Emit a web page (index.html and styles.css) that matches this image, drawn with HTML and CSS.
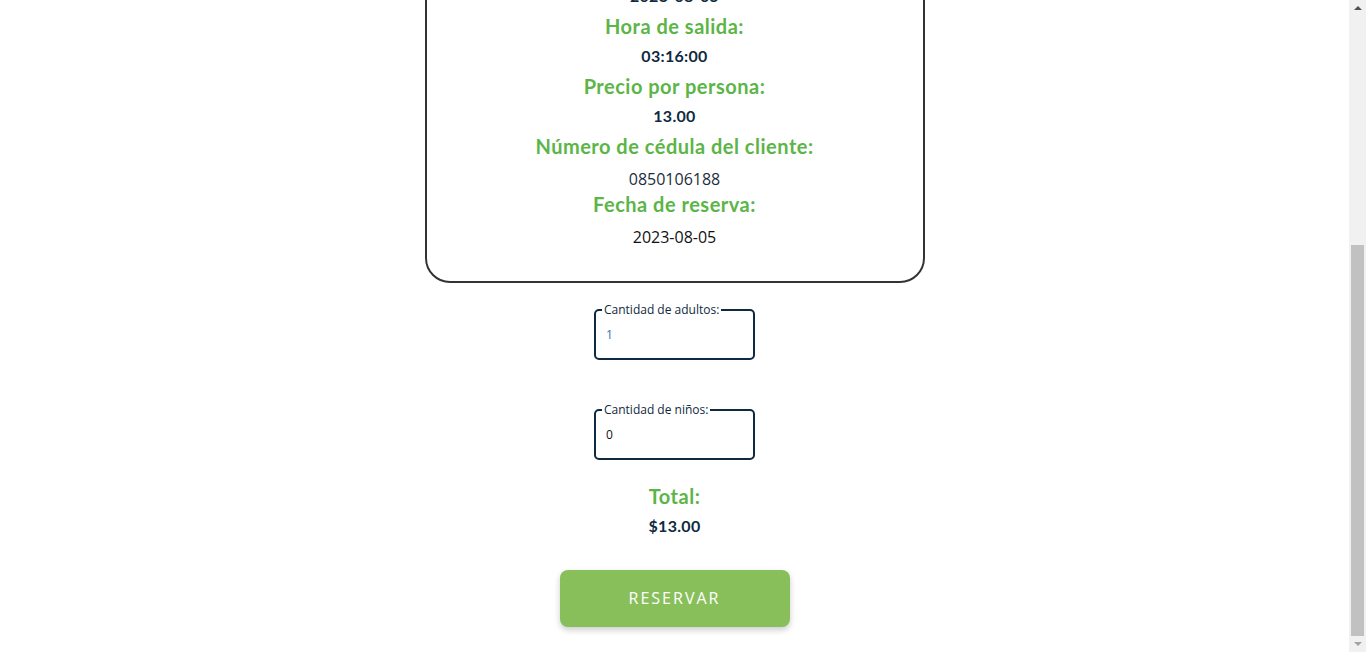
FILE: index.html
```html
<!DOCTYPE html>
<html lang="es">
<head>
<meta charset="utf-8">
<title>Reservar</title>
<link rel="stylesheet" href="styles.css">
</head>
<body>
<main class="page">
  <h1 class="title">Detalles de la reserva</h1>
  <section class="card">
    <h3 class="label">Nombre del paquete:</h3>
    <p class="value">Tour Isla de la Plata</p>
    <h3 class="label">Destino:</h3>
    <p class="value">Puerto López</p>
    <h3 class="label">Fecha de salida:</h3>
    <p class="value">2023-08-05</p>
    <h3 class="label">Hora de salida:</h3>
    <p class="value">03:16:00</p>
    <h3 class="label">Precio por persona:</h3>
    <p class="value">13.00</p>
    <h3 class="label">Número de cédula del cliente:</h3>
    <p class="plain">0850106188</p>
    <h3 class="label">Fecha de reserva:</h3>
    <p class="plain dark">2023-08-05</p>
  </section>
  <form class="form">
    <fieldset class="qty">
      <legend>Cantidad de adultos:</legend>
      <input class="qty-input blue" type="number" value="1">
    </fieldset>
    <fieldset class="qty second">
      <legend>Cantidad de niños:</legend>
      <input class="qty-input" type="number" value="0">
    </fieldset>
    <h3 class="label total">Total:</h3>
    <p class="value">$13.00</p>
    <button class="btn" type="button">RESERVAR</button>
  </form>
</main>
<div class="scrollbar" aria-hidden="true">
  <span class="arrow up"></span>
  <span class="thumb"></span>
  <span class="arrow down"></span>
</div>
<script src="script.js"></script>
</body>
</html>
```
FILE: styles.css
```css
html { overflow: hidden; }
body {
  margin: 0;
  font-family: "Open Sans", sans-serif;
  background: #fff;
}
.page {
  width: calc(100% - 17px);
  display: flex;
  flex-direction: column;
  align-items: center;
  padding: 30px 0 25px;
  box-sizing: border-box;
}
.title {
  margin: 0 0 30px;
  font: 700 28px/40px "Lato", sans-serif;
  color: #0f2a40;
}
.card {
  width: 500px;
  box-sizing: border-box;
  border: 2px solid #333;
  border-radius: 25px;
  padding: 20px 20px 34px;
  text-align: center;
}
.label {
  margin: 0;
  font: 700 20px/30px "Lato", sans-serif;
  letter-spacing: 0.5px;
  color: #5bb547;
}
.value {
  margin: 0;
  font: 700 16px/30px "Lato", sans-serif;
  letter-spacing: 0.3px;
  color: #0f2a40;
}
.plain {
  margin: 8px 0 0;
  font: 400 16px/20px "Open Sans", sans-serif;
  color: #1e2d3d;
}
.plain.dark { color: #111; }
.form {
  display: flex;
  flex-direction: column;
  align-items: center;
  text-align: center;
}
.qty {
  margin: 18px 0 0;
  width: 161px;
  box-sizing: border-box;
  border: 2px solid #0f2a40;
  border-radius: 5px;
  padding: 0 6px 8px;
  text-align: left;
}
.qty.second { margin-top: 41px; }
.qty legend {
  padding: 0 2px;
  font: 400 12px "Open Sans", sans-serif;
  color: #0f2a40;
}
.qty-input {
  display: block;
  width: 100%;
  height: 32px;
  box-sizing: border-box;
  border: 0;
  outline: 0;
  padding: 0 4px;
  background: transparent;
  font: 400 12px "Open Sans", sans-serif;
  color: #111;
  -moz-appearance: textfield;
}
.qty-input::-webkit-inner-spin-button,
.qty-input::-webkit-outer-spin-button { -webkit-appearance: none; margin: 0; }
.qty-input.blue { color: #3574a8; }
.total { margin-top: 21px; }
.btn {
  margin-top: 29px;
  width: 230px;
  height: 57px;
  border: 0;
  border-radius: 8px;
  background: #88bf5b;
  color: #fff;
  font: 400 16px "Open Sans", sans-serif;
  letter-spacing: 2px;
  padding: 0 0 2px;
  box-shadow: 0 3px 6px rgba(0, 0, 0, 0.2);
  cursor: pointer;
}
.scrollbar {
  position: fixed;
  top: 0;
  right: 0;
  width: 17px;
  height: 100%;
  background: #f1f1f1;
}
.thumb {
  position: absolute;
  left: 2px;
  top: 245px;
  width: 13px;
  height: 391px;
  background: #c1c1c1;
}
.arrow {
  position: absolute;
  left: 5px;
  width: 0;
  height: 0;
  border-left: 4px solid transparent;
  border-right: 4px solid transparent;
}
.arrow.up { top: 6px; border-bottom: 4px solid #505050; }
.arrow.down { bottom: 6px; border-top: 4px solid #a3a3a3; }
```
FILE: script.js
```js
window.scrollTo(0, document.documentElement.scrollHeight);
```
